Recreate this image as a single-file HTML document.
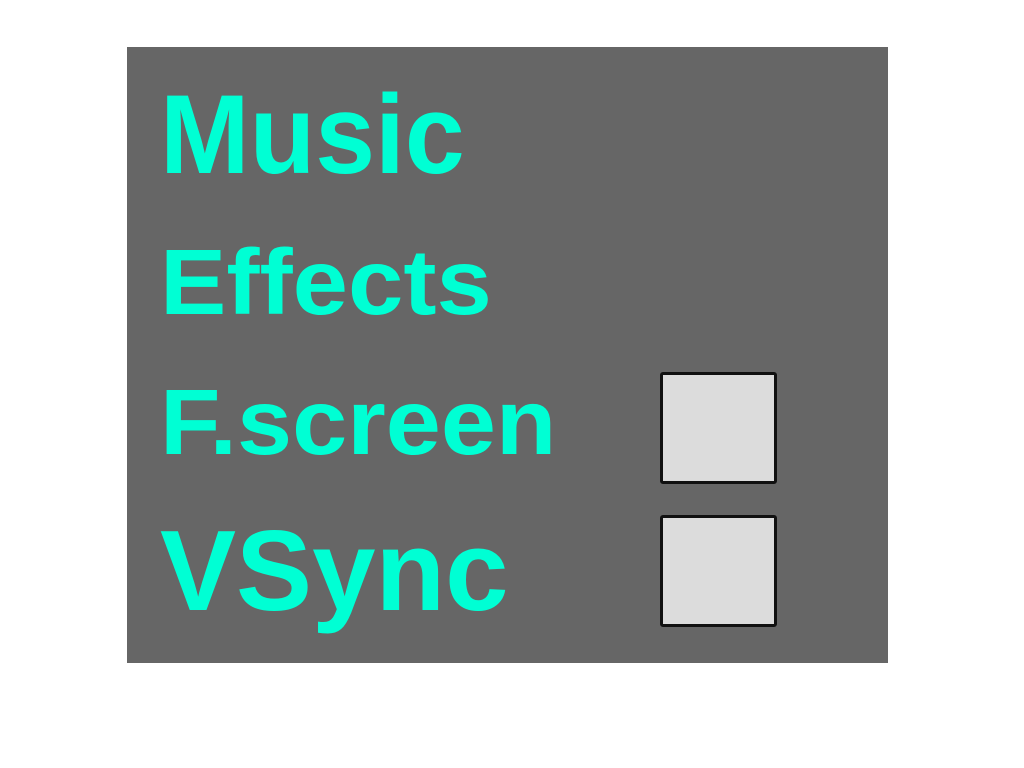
<!DOCTYPE html>
<html><head><style>
html,body{margin:0;padding:0;width:1024px;height:768px;background:#fff;overflow:hidden}
#p{position:absolute;left:127px;top:47px;width:761px;height:616px;background:#666}
.t{position:absolute;font-family:"Liberation Sans",sans-serif;font-weight:bold;color:#00ffd4;line-height:1;white-space:nowrap;transform-origin:0 0}
.cb{position:absolute;left:660px;width:111px;height:106px;background:#dcdcdc;border:3px solid #111;border-radius:3px}
</style></head><body>
<div id="p"></div>
<div class="t" style="left:160px;top:79px;font-size:112px;transform:scaleX(0.96)">Music</div>
<div class="t" style="left:160px;top:236px;font-size:93px;transform:scaleX(1.07)">Effects</div>
<div class="t" style="left:160px;top:376px;font-size:93px;transform:scaleX(1.065)">F.screen</div>
<div class="t" style="left:160px;top:515px;font-size:114px">VSync</div>
<div class="cb" style="top:372px"></div>
<div class="cb" style="top:515px"></div>
</body></html>
